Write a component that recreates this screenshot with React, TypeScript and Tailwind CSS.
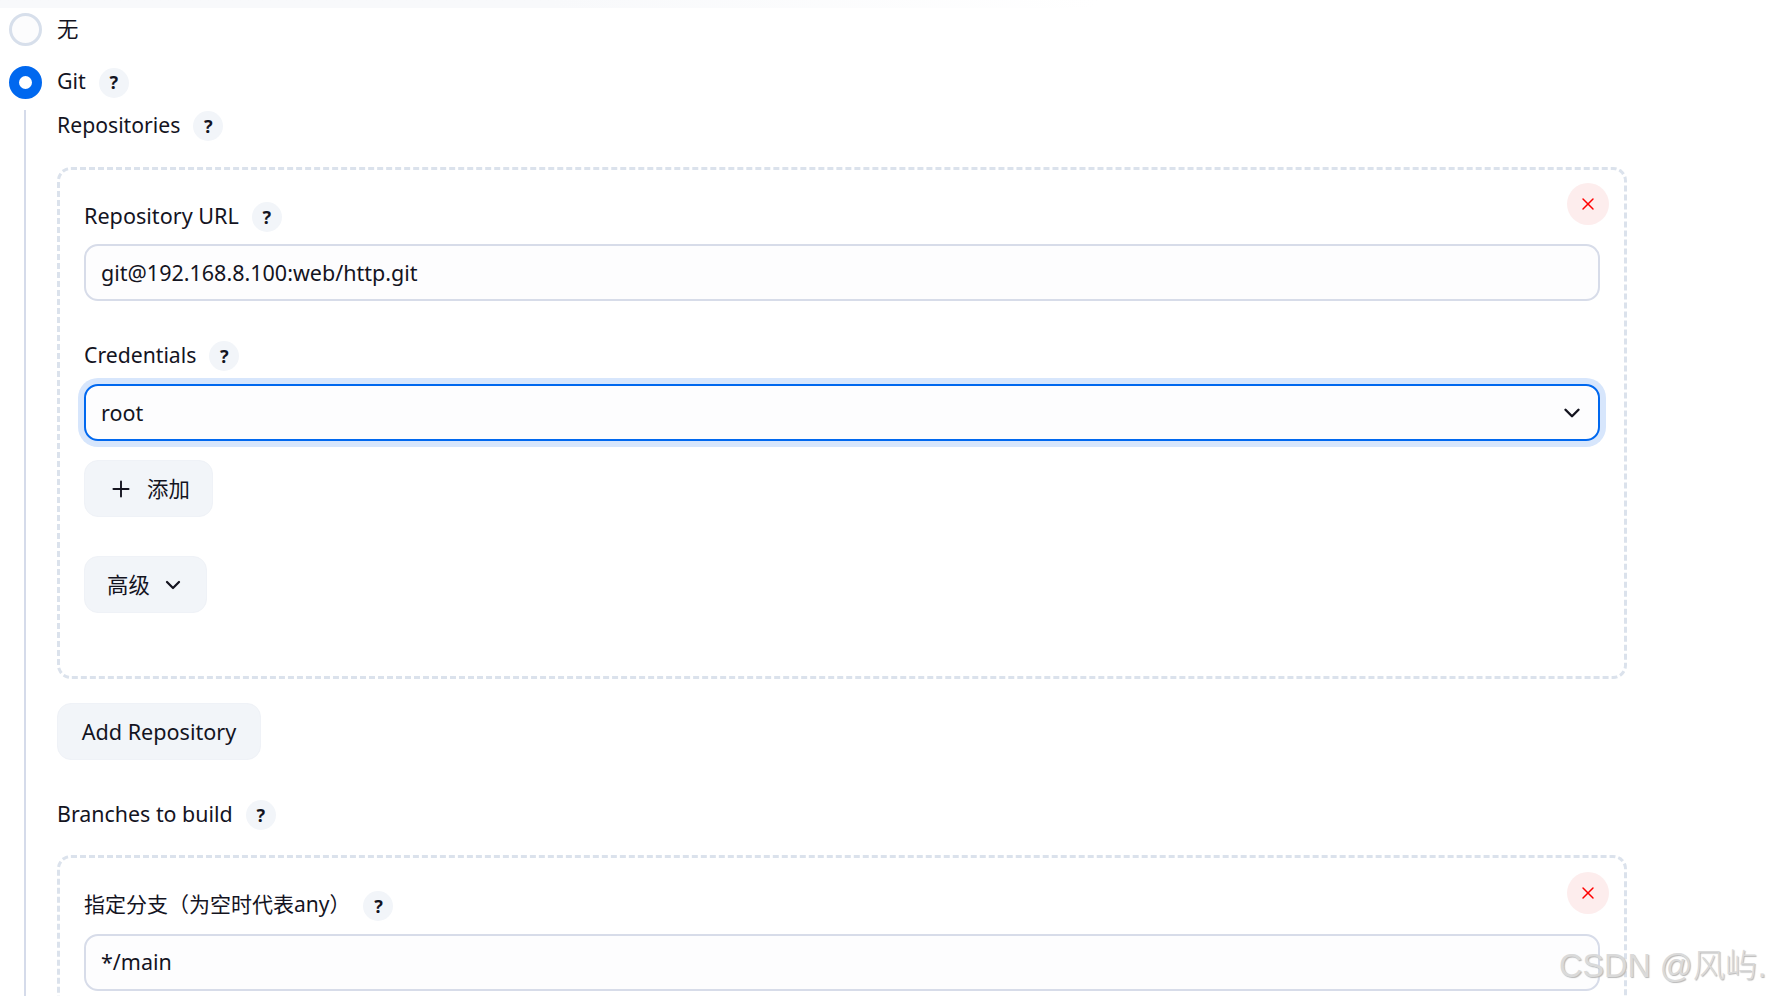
import { ChevronDown, Plus, X } from 'lucide-react';

const fontClass = "font-['Noto_Sans','Noto_Sans_CJK_SC',sans-serif]";

function Help() {
	return (
		<span className="ml-[13px] flex h-[30px] w-[30px] shrink-0 items-center justify-center rounded-full bg-[#f2f5f9] text-[18px] font-bold text-[#14141f]">?</span>
	);
}

function FieldLabel({ text, className, textClass = 'text-[21.4px]' }: { text: string; className?: string; textClass?: string }) {
	return (
		<div className={`flex h-[30px] items-center text-[#14141f] ${textClass} ${className ?? ''}`}>
			<span className="-translate-y-px">{text}</span>
			<Help />
		</div>
	);
}

function DeleteButton({ className }: { className: string }) {
	return (
		<button className={`absolute right-[15px] flex h-[42px] w-[42px] items-center justify-center rounded-full bg-[#fdeded] text-[#ff0000] ${className}`}>
			<X size={20} strokeWidth={1.75} />
		</button>
	);
}

function SoftButton({ children, className }: { children: React.ReactNode; className: string }) {
	return (
		<button className={`flex h-[57px] items-center rounded-[14px] border border-[#eff2f7] bg-[#f2f5f9] text-[14px] text-[#14141f] ${className}`}>
			{children}
		</button>
	);
}

export default function App() {
	return (
		<div className={`relative h-[996px] w-full overflow-hidden bg-white ${fontClass}`}>
			<div className="h-[8px] w-[1100px] bg-gradient-to-r from-[#f8f9fb] via-[#f8f9fb] to-white" />

			<div className="mt-[5px] flex h-[33px] items-center pl-[9px]">
				<span className="h-[33px] w-[33px] rounded-full border-[3px] border-[#d7dfeb] bg-[#fcfcfd]" />
				<span className="ml-[15px] text-[21.4px] text-[#14141f]">无</span>
			</div>

			<div className="mt-[20px] flex h-[33px] items-center pl-[9px]">
				<span className="h-[33px] w-[33px] rounded-full border-[10px] border-[#0068ef] bg-white" />
				<span className="ml-[15px] -translate-y-px text-[21.4px] text-[#14141f]">Git</span>
				<Help />
			</div>

			<div className="ml-[24px] mt-[11px] w-[1603px] border-l-[2px] border-[#d5dbea] pl-[31px]">
				<FieldLabel text="Repositories" textClass="text-[21.2px]" className="translate-y-px" />

				<div className="relative mt-[27px] h-[512px] rounded-[14px] border-[3px] border-dashed border-[#dbe2ec] pl-[24px] pr-[24px] pt-[32px]">
					<DeleteButton className="top-[13px]" />
					<FieldLabel text="Repository URL" textClass="text-[21.6px]" />
					<div className="mt-[12px] flex h-[57px] items-center rounded-[14px] border-[2px] border-[#d7dce9] bg-[#fdfdfe] pl-[15px] pr-[15px] pt-px text-[21.5px] text-[#14141f]">
						git@192.168.8.100:web/http.git
					</div>
					<FieldLabel text="Credentials" textClass="text-[21.2px]" className="mt-[40px]" />
					<div className="mt-[13px] flex h-[57px] items-center justify-between rounded-[14px] border-[2px] border-[#0068ef] bg-[#fdfdfe] pl-[15px] pr-[13px] pt-px text-[21.5px] text-[#14141f] shadow-[0_0_0_6px_#d7e6fc]">
						<span>root</span>
						<ChevronDown size={26} strokeWidth={2.25} />
					</div>
					<SoftButton className="mt-[19px] w-[129px] pl-[23px] pt-px">
						<Plus size={26} strokeWidth={1.75} />
						<span className="ml-[13px] text-[21.4px]">添加</span>
					</SoftButton>
					<SoftButton className="mt-[39px] w-[123px] pl-[22px] pt-px">
						<span className="text-[21.4px]">高级</span>
						<ChevronDown size={24} strokeWidth={2.25} className="ml-[11px]" />
					</SoftButton>
				</div>

				<SoftButton className="mt-[24px] w-[204px] justify-center pt-[2px]"><span className="text-[21.6px]">Add Repository</span></SoftButton>

				<FieldLabel text="Branches to build" className="mt-[40px]" />

				<div className="relative mt-[25px] h-[200px] rounded-[14px] border-[3px] border-dashed border-[#dbe2ec] pl-[24px] pr-[24px] pt-[33px]">
					<DeleteButton className="top-[14px]" />
					<FieldLabel text="指定分支（为空时代表any）" textClass="text-[21px]" />
					<div className="mt-[13px] flex h-[57px] items-center rounded-[14px] border-[2px] border-[#d7dce9] bg-[#fdfdfe] px-[15px] text-[21.5px] text-[#14141f]">
						*/main
					</div>
				</div>
			</div>

			<div className="absolute left-[1559px] top-[942px] whitespace-nowrap font-['Liberation_Sans','Noto_Sans_CJK_SC',sans-serif] text-[32.4px] font-light text-[#dadada] [text-shadow:1px_1px_1px_#b8b8b8]">
				CSDN @风屿.
			</div>
		</div>
	);
}
